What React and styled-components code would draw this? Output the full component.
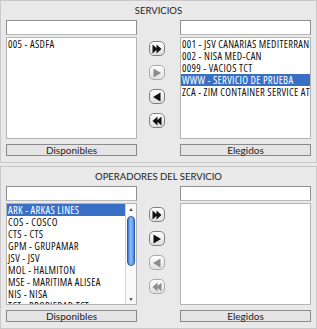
import React from "react";
import styled, { createGlobalStyle } from "styled-components";

const Global = createGlobalStyle`
  html, body { margin: 0; padding: 0; background: #e9e9e9; }
  body { font-family: Lato, "Open Sans", sans-serif; }
  * { box-sizing: border-box; }
`;

const Page = styled.div`
  width: 317px;
  display: flex;
  flex-direction: column;
  gap: 3px;
`;

const Panel = styled.section`
  border: 1px solid #c9c9c9;
  background: #e9e9e9;
  padding: 0 5px 6px 5px;
`;

const Title = styled.div`
  height: 19px;
  display: flex;
  align-items: center;
  justify-content: center;
  font-size: 9.5px;
  color: #222;
`;

const Body = styled.div`
  display: grid;
  grid-template-columns: 131px 1fr 131px;
`;

const Column = styled.div`
  display: flex;
  flex-direction: column;
`;

const Search = styled.div`
  height: 15px;
  background: #fff;
  border: 1px solid #8f8f8f;
  border-bottom-color: #b9b9b9;
`;

const ListBox = styled.div`
  margin-top: 2px;
  height: 102px;
  background: #fff;
  border: 1px solid #b4b4b4;
  display: flex;
  overflow: hidden;
`;

const Items = styled.div`
  flex: 1;
  overflow: hidden;
`;

const Item = styled.div`
  height: 12px;
  line-height: 12px;
  font-family: "Open Sans", sans-serif;
  font-stretch: 75%;
  font-size: 10.5px;
  letter-spacing: 0.3px;
  padding-left: 1px;
  white-space: nowrap;
  overflow: hidden;
  color: ${(p) => (p.$selected ? "#fff" : "#111")};
  background: ${(p) => (p.$selected ? "#3a6fc6" : "transparent")};
`;

const ScrollBar = styled.div`
  width: 11px;
  border-left: 1px solid #d0d0d0;
  display: flex;
  flex-direction: column;
  align-items: center;
  background: #fafafa;
`;

const Arrow = styled.div`
  height: 10px;
  font-size: 5px;
  line-height: 10px;
  color: #333;
`;

const Track = styled.div`
  flex: 1;
  width: 100%;
  display: flex;
  justify-content: center;
  padding-top: 2px;
`;

const Thumb = styled.div`
  width: 8px;
  height: 50px;
  border-radius: 4px;
  border: 1px solid #2c5aa8;
  background: linear-gradient(to right, #3b78d8, #8fc0f5 45%, #4a86e0);
`;

const Caption = styled.div`
  margin-top: 5px;
  height: 12px;
  border: 1px solid #8a8a8a;
  background: #e4e4e4;
  font-size: 10px;
  display: flex;
  align-items: center;
  justify-content: center;
  color: #222;
`;

const Actions = styled.div`
  display: flex;
  flex-direction: column;
  align-items: center;
  gap: 9px;
  padding-top: 21px;
  padding-right: 4px;
`;

const RoundButton = styled.div`
  width: 16px;
  height: 15px;
  border-radius: 5px;
  border: 1px solid ${(p) => (p.$disabled ? "#a9a9a9" : "#7f7f7f")};
  background: linear-gradient(#ffffff, #e0e0e0);
  display: flex;
  align-items: center;
  justify-content: center;
  color: ${(p) => (p.$disabled ? "#8d8d8d" : "#111")};
`;

const icons = {
  all: <path d="M0.5 0.5 L5.5 5 L0.5 9.5 Z M4.5 0.5 L9.5 5 L4.5 9.5 Z" />,
  one: <path d="M1.5 0.5 L9 5 L1.5 9.5 Z" />,
  back: <path d="M8.5 0.5 L1 5 L8.5 9.5 Z" />,
  none: <path d="M9.5 0.5 L4.5 5 L9.5 9.5 Z M5.5 0.5 L0.5 5 L5.5 9.5 Z" />,
};

function MoveButton({ kind, disabled }) {
  return (
    <RoundButton $disabled={disabled}>
      <svg width="10" height="10" viewBox="0 0 10 10" fill="currentColor">
        {icons[kind]}
      </svg>
    </RoundButton>
  );
}

function List({ items, selected, scroll }) {
  return (
    <ListBox>
      <Items>
        {items.map((t) => (
          <Item key={t} $selected={t === selected}>
            {t}
          </Item>
        ))}
      </Items>
      {scroll && (
        <ScrollBar>
          <Arrow>▲</Arrow>
          <Track>
            <Thumb />
          </Track>
          <Arrow>▼</Arrow>
        </ScrollBar>
      )}
    </ListBox>
  );
}

function Selector({ title, left, right, leftSelected, rightSelected, scroll, disabled }) {
  return (
    <Panel>
      <Title>{title}</Title>
      <Body>
        <Column>
          <Search />
          <List items={left} selected={leftSelected} scroll={scroll} />
          <Caption>Disponibles</Caption>
        </Column>
        <Actions>
          <MoveButton kind="all" disabled={disabled.includes("all")} />
          <MoveButton kind="one" disabled={disabled.includes("one")} />
          <MoveButton kind="back" disabled={disabled.includes("back")} />
          <MoveButton kind="none" disabled={disabled.includes("none")} />
        </Actions>
        <Column>
          <Search />
          <List items={right} selected={rightSelected} />
          <Caption>Elegidos</Caption>
        </Column>
      </Body>
    </Panel>
  );
}

export default function App() {
  return (
    <Page>
      <Global />
      <Selector
        title="SERVICIOS"
        left={["005 - ASDFA"]}
        right={[
          "001 - JSV CANARIAS MEDITERRANEO",
          "002 - NISA MED-CAN",
          "0099 - VACIOS TCT",
          "WWW - SERVICIO DE PRUEBA",
          "ZCA - ZIM CONTAINER SERVICE ATLANTIC",
        ]}
        rightSelected="WWW - SERVICIO DE PRUEBA"
        disabled={["one"]}
      />
      <Selector
        title="OPERADORES DEL SERVICIO"
        left={[
          "ARK - ARKAS LINES",
          "COS - COSCO",
          "CTS - CTS",
          "GPM - GRUPAMAR",
          "JSV - JSV",
          "MOL - HALMITON",
          "MSE - MARITIMA ALISEA",
          "NIS - NISA",
          "TCT - PROPIEDAD TCT",
        ]}
        right={[]}
        leftSelected="ARK - ARKAS LINES"
        scroll
        disabled={["back", "none"]}
      />
    </Page>
  );
}
